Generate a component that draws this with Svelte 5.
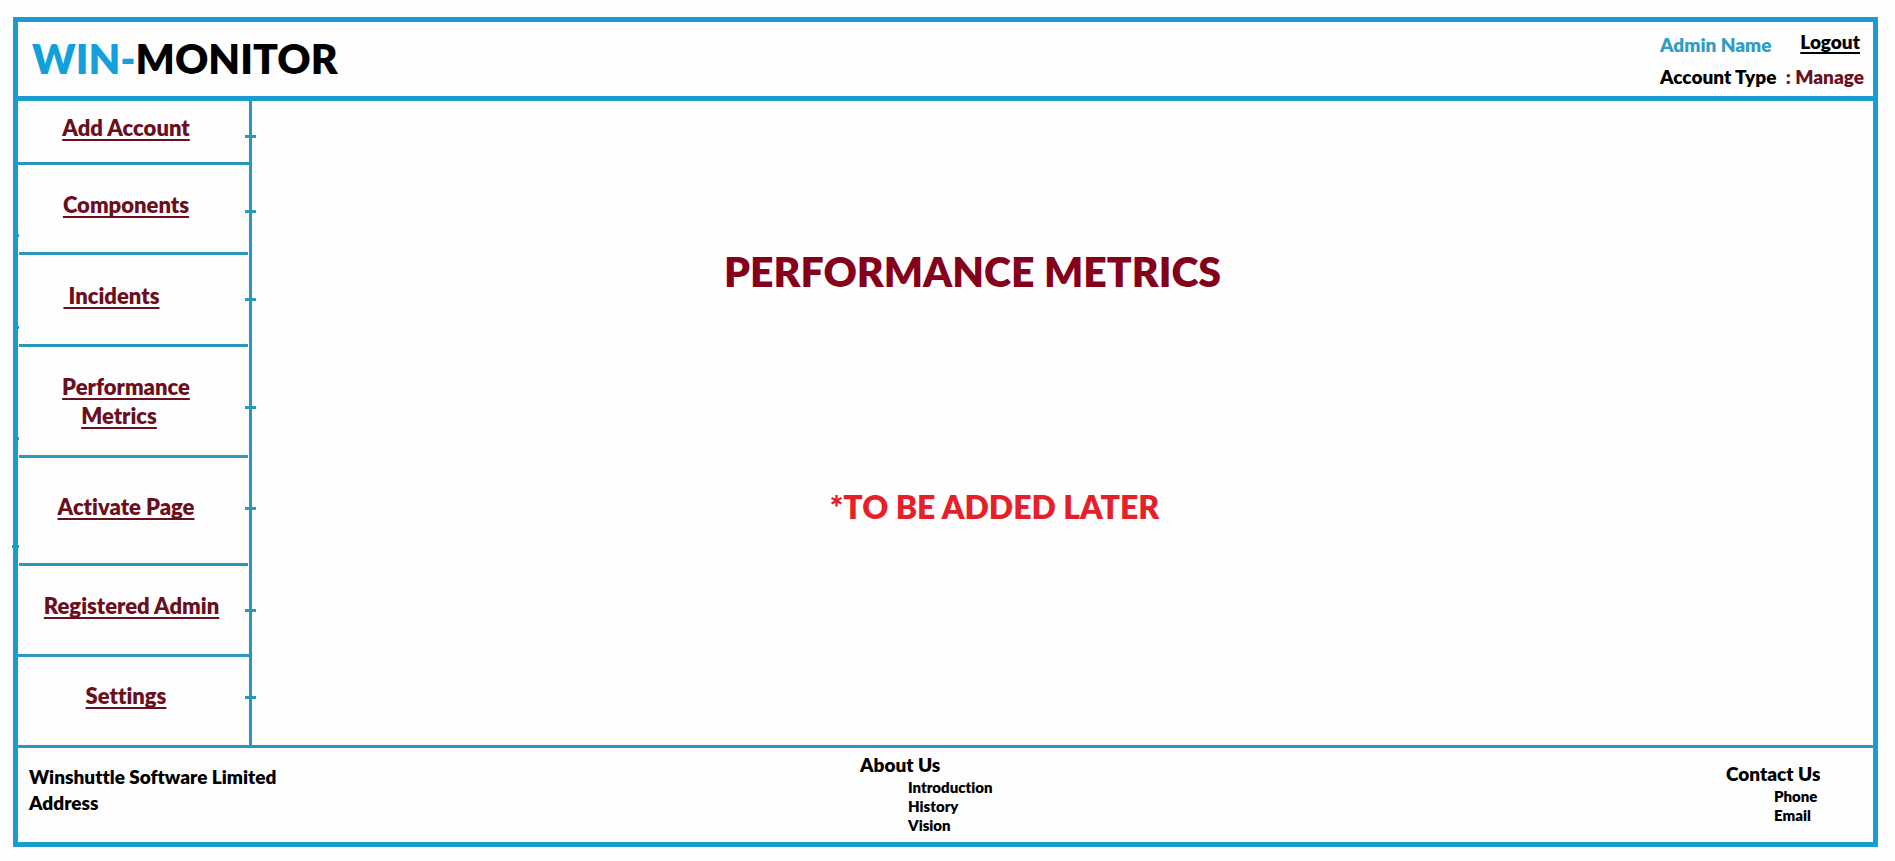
<script>
  // tick / nub: vertical position of the marks on the right and left rails, in percent of the row
  const items = [
    { lines: ['Add Account'], tick: 53, full: true },
    { lines: ['Components'], tick: 50, nub: 77 },
    { lines: ['\u00a0Incidents'], tick: 47, nub: 77, align: 'near' },
    { lines: ['Performance', 'Metrics'], tick: 53, nub: 81, align: 'tall' },
    { lines: ['Activate Page'], tick: 45, nub: 81, out: true },
    { lines: ['Registered Admin'], tick: 47, full: true, align: 'wide' },
    { lines: ['Settings'], tick: 44 }
  ];
</script>

<div class="page">
  <div class="frame">
    <header>
      <h1><span>WIN-</span>MONITOR</h1>
      <div class="user">
        <div class="top">
          <span class="name">Admin Name</span>
          <a href="#logout">Logout</a>
        </div>
        <div class="account"><span>Account Type</span> <span class="type">: Manage</span></div>
      </div>
    </header>

    <div class="body">
      <nav>
        {#each items as item}
          <div class="row {item.align ?? ''}" class:full={item.full}>
            <a href="#section">
              {#each item.lines as line}<span>{line}</span>{/each}
            </a>
            <i class="tick" style="top: {item.tick}%"></i>
            {#if item.nub}
              <i class="nub" class:out={item.out} style="top: {item.nub}%"></i>
            {/if}
          </div>
        {/each}
      </nav>
      <main>
        <h2>PERFORMANCE METRICS</h2>
        <p>*TO BE ADDED LATER</p>
      </main>
    </div>

    <footer>
      <address>Winshuttle Software Limited<br />Address</address>
      <section>
        <h3>About Us</h3>
        <ul>
          <li>Introduction</li>
          <li>History</li>
          <li>Vision</li>
        </ul>
      </section>
      <section class="contact">
        <h3>Contact Us</h3>
        <ul>
          <li>Phone</li>
          <li>Email</li>
        </ul>
      </section>
    </footer>
  </div>
</div>

<style>
  :global(body) {
    margin: 0;
    background: #fefefe;
  }
  .page {
    --blue: #1b9cd1;
    --line: #2b97bf;
    --wine: #6b0f1d;
    box-sizing: border-box;
    min-height: 100vh;
    padding: 17px 17px 14px 13px;
    display: flex;
    font-family: Lato, Carlito, sans-serif;
    font-weight: 800;
    font-size: 19px;
    line-height: 26px;
    font-variant-ligatures: none;
    color: #000;
  }
  .frame {
    flex: 1;
    display: flex;
    flex-direction: column;
    border: 5px solid var(--blue);
  }
  h1, h2, h3, p, ul {
    margin: 0;
    padding: 0;
    font-weight: 800;
  }
  header {
    display: flex;
    justify-content: space-between;
    border-bottom: 5px solid var(--blue);
    padding: 8px 9px 3px 14px;
  }
  h1 {
    font-size: 41px;
    line-height: 58px;
  }
  h1 span {
    color: #12a0dc;
  }
  .user {
    min-width: 204px;
    line-height: 33px;
  }
  .top, .account {
    display: flex;
    justify-content: space-between;
  }
  .top {
    padding-right: 4px;
    line-height: 30px;
  }
  .top a {
    line-height: 24px;
  }
  .name {
    color: #2f9cc6;
  }
  .type {
    color: var(--wine);
  }
  a {
    color: inherit;
    text-decoration: underline;
    text-decoration-thickness: 2px;
    text-underline-offset: 3px;
    text-decoration-skip-ink: none;
  }
  .body {
    flex: 1;
    display: flex;
  }
  nav {
    flex: none;
    width: 231px;
    display: grid;
    grid-template-rows: 64fr 90fr 92fr 111fr 108fr 91fr 88fr;
    border-right: 3px solid var(--line);
    color: var(--wine);
    font-size: 22px;
    line-height: 29px;
  }
  .row {
    position: relative;
    display: flex;
    align-items: center;
    justify-content: center;
    padding: 0 15px 12px 0;
  }
  .row.near {
    padding-right: 44px;
  }
  .row.wide {
    padding-right: 4px;
  }
  .row.tall {
    padding-bottom: 4px;
  }
  .row a {
    display: flex;
    flex-direction: column;
    align-items: center;
    text-decoration: none;
  }
  .row a span {
    text-decoration: underline;
    text-decoration-thickness: 2px;
    text-underline-offset: 3px;
    text-decoration-skip-ink: none;
  }
  .row a span + span {
    margin-right: 14px;
  }
  .row:not(:last-child)::after {
    content: '';
    position: absolute;
    left: 1px;
    right: 1px;
    bottom: 0;
    height: 3px;
    background: var(--line);
  }
  .row.full::after {
    left: 0;
    right: 0;
  }
  .tick, .nub {
    position: absolute;
    height: 3px;
    background: var(--line);
  }
  .tick {
    right: -7px;
    width: 11px;
  }
  .nub {
    left: 0;
    width: 1px;
  }
  .nub.out {
    left: -6px;
    width: 7px;
    background: var(--blue);
  }
  main {
    flex: 1;
    display: flex;
    flex-direction: column;
    align-items: center;
    padding: 142px 180px 0 0;
  }
  h2 {
    font-size: 41px;
    line-height: 58px;
    color: #85001a;
  }
  p {
    margin: 183px 0 0 44px;
    font-size: 32px;
    line-height: 46px;
    color: #e71f28;
  }
  footer {
    display: grid;
    grid-template-columns: 842fr 866fr 147fr;
    min-height: 94px;
    border-top: 3px solid var(--line);
  }
  address {
    font-style: normal;
    padding: 16px 0 0 11px;
  }
  section {
    padding-top: 4px;
  }
  .contact {
    padding-top: 13px;
  }
  h3 {
    font-size: 19px;
    line-height: 26px;
  }
  ul {
    list-style: none;
    padding-left: 48px;
    font-size: 15px;
    line-height: 19px;
  }
</style>
